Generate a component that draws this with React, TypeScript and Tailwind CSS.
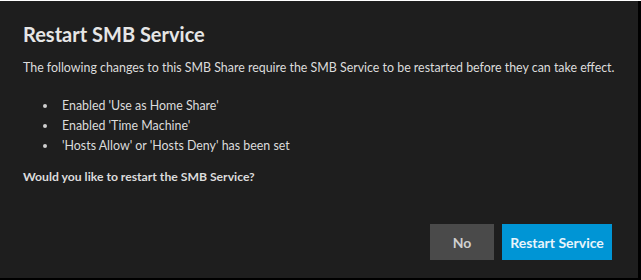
const changes = [
  "Enabled 'Use as Home Share'",
  "Enabled 'Time Machine'",
  "'Hosts Allow' or 'Hosts Deny' has been set",
];

export default function App() {
  return (
    <div className="h-[280px] w-[641px] bg-black" style={{ fontFamily: "Lato, sans-serif" }}>
      <div className="mt-px flex h-[277px] w-[638px] flex-col bg-[#1e1e1e] px-[23px] pt-[21px] text-[#dcdcdc]">
        <h1 className="text-[20px] font-bold leading-[24px] text-[#e6e6e6]">Restart SMB Service</h1>
        <p className="mt-[14px] text-[12.4px] leading-[16px]">
          The following changes to this SMB Share require the SMB Service to be restarted before they can take effect.
        </p>
        <ul className="mt-[22px] ml-[35px] list-disc space-y-[4px] text-[12.4px] leading-[16px] marker:text-[#cfcfcf]">
          {changes.map((c) => (
            <li key={c} className="pl-[4px]">
              {c}
            </li>
          ))}
        </ul>
        <p className="mt-[15px] text-[12.2px] font-bold leading-[16px]">Would you like to restart the SMB Service?</p>
        <div className="mt-auto mb-[18px] flex justify-end gap-[8px] pr-[3px]">
          <button className="h-[36px] w-[64px] bg-[#4a4a4a] text-[14px] font-bold text-[#d0d0d0]">No</button>
          <button className="h-[36px] w-[110px] bg-[#0095d5] text-[14px] font-bold text-[#e8f4fb]">
            Restart Service
          </button>
        </div>
      </div>
    </div>
  );
}
